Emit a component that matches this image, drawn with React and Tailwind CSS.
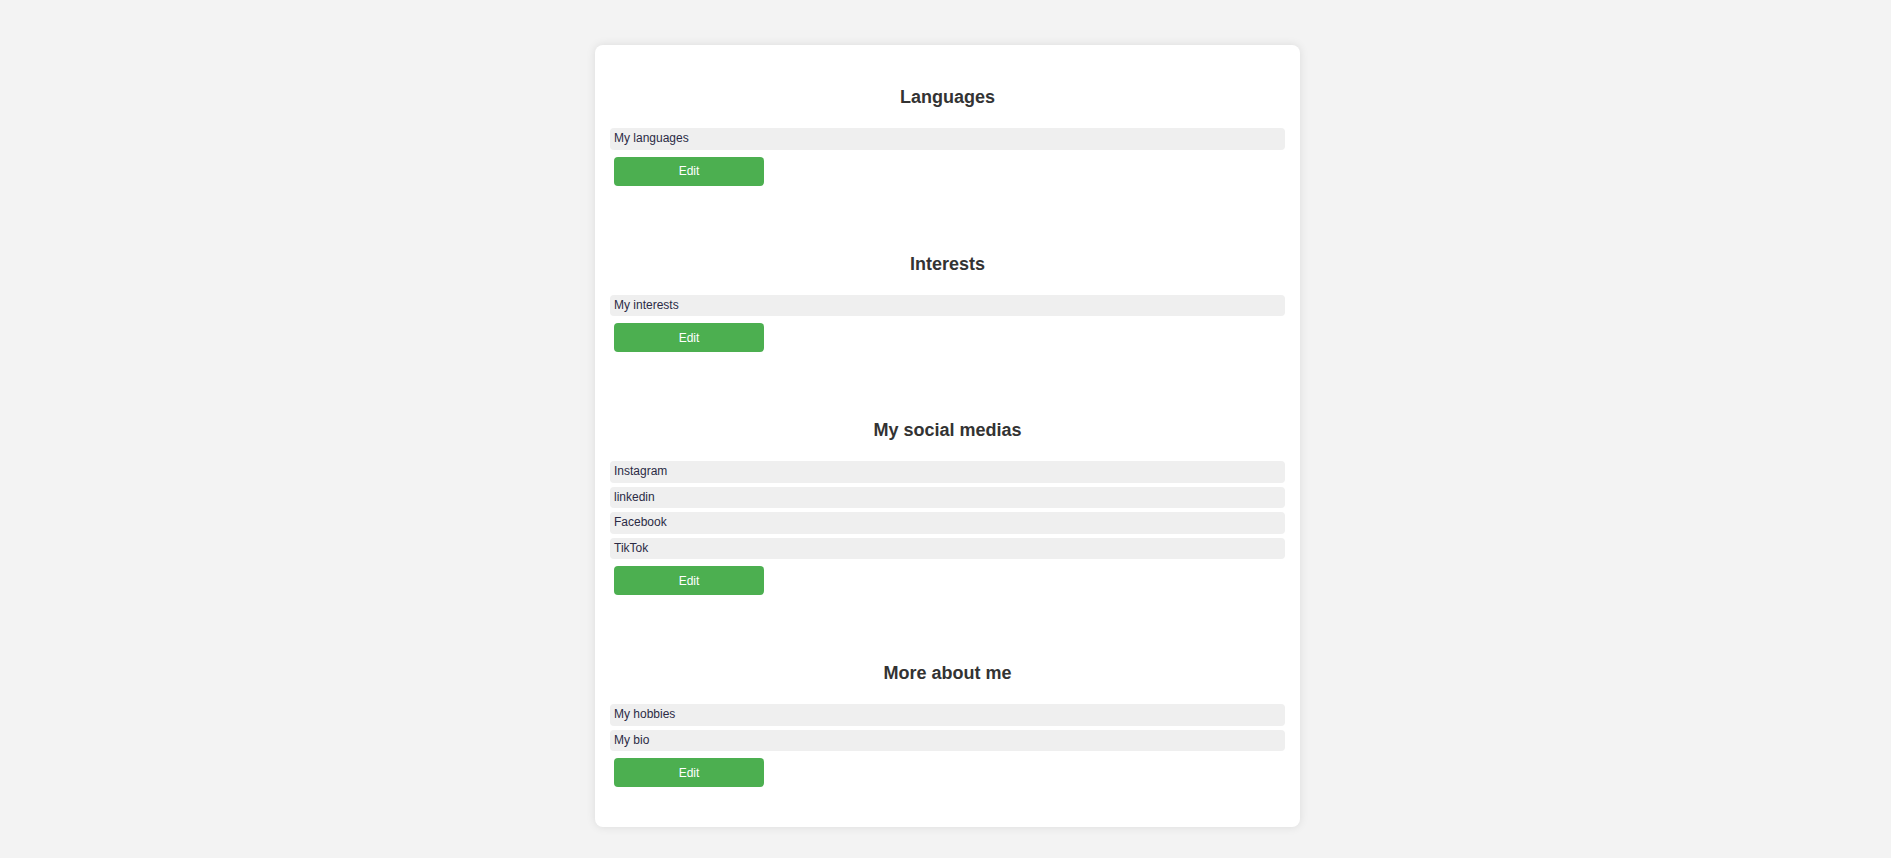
import React from "react";

const sections = [
  { title: "Languages", items: ["My languages"] },
  { title: "Interests", items: ["My interests"] },
  { title: "My social medias", items: ["Instagram", "linkedin", "Facebook", "TikTok"] },
  { title: "More about me", items: ["My hobbies", "My bio"] },
];

export default function App() {
  return (
    <div
      className="min-h-[858px] w-full bg-[#f3f3f3] pt-[45px] pb-[30px] pl-[4px]"
      style={{ fontFamily: '"Liberation Sans", Arial, sans-serif' }}
    >
      <div className="mx-auto w-[705px] rounded-lg bg-white px-[15px] pt-[42px] pb-[40px] shadow-[0_0_10px_rgba(0,0,0,0.1)]">
        <div className="flex flex-col gap-[68px]">
          {sections.map((s) => (
            <section key={s.title} className="flex flex-col">
              <h3 className="mb-5 text-center text-[18px] leading-[21px] font-bold text-[#333]">
                {s.title}
              </h3>
              <div className="flex flex-col gap-1">
                {s.items.map((it) => (
                  <div
                    key={it}
                    className="rounded bg-[#efefef] px-1 py-1 text-[12px] leading-[13.5px] text-[#2b2b45]"
                  >
                    {it}
                  </div>
                ))}
              </div>
              <div className="mt-[7px] pl-1">
                <button className="h-[29px] w-[150px] rounded bg-[#4caf50] text-[12px] text-white">
                  Edit
                </button>
              </div>
            </section>
          ))}
        </div>
      </div>
    </div>
  );
}
